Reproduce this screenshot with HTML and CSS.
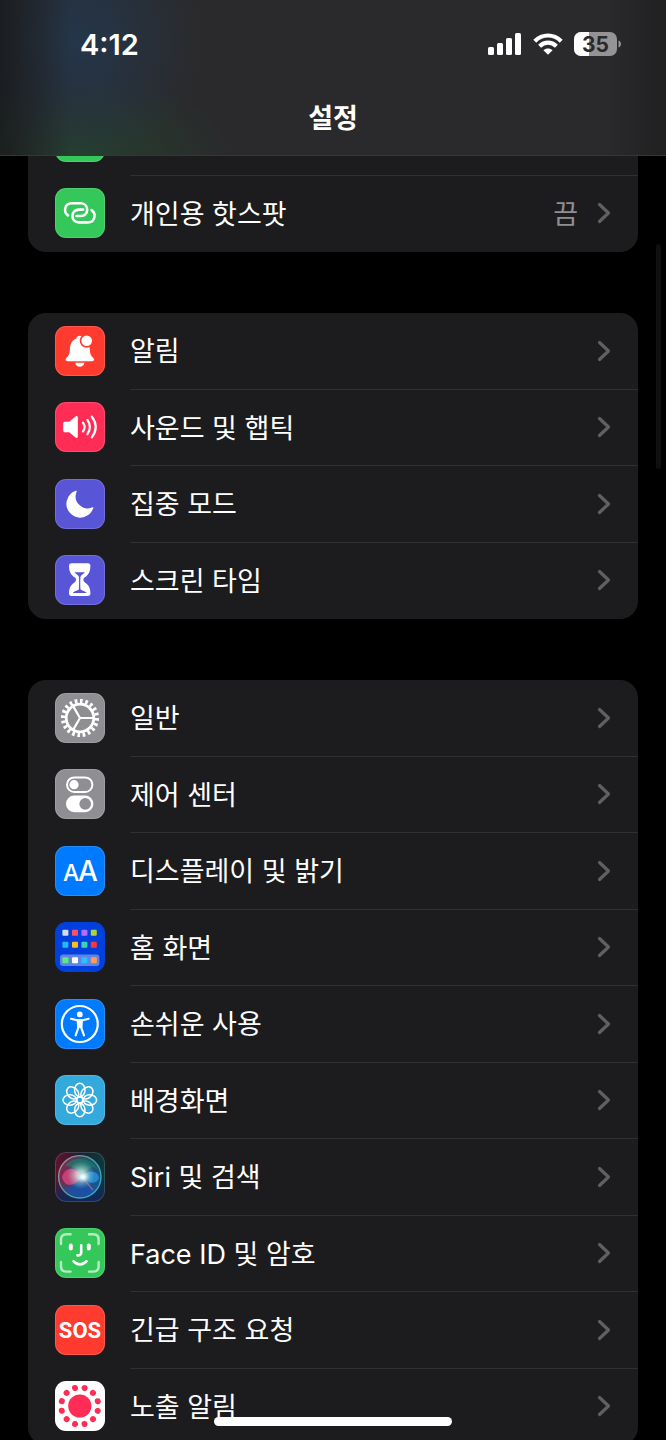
FILE: index.html
```html
<!DOCTYPE html>
<html lang="ko">
  <head>
    <title>설정</title>
    <meta charset="UTF-8" />
    <meta name="viewport" content="width=device-width, initial-scale=1" />
    <link rel="stylesheet" href="styles.css">
  </head>
  <body>
    <svg class="defs" aria-hidden="true">
      <symbol id="chevron" viewBox="0 0 14 22">
        <path d="M2.5 2.5 11.5 11 2.5 19.5" fill="none" stroke="#5f5f64" stroke-width="3.2" stroke-linecap="round" stroke-linejoin="round" />
      </symbol>
    </svg>

    <div class="screen">
      <header class="header">
        <div class="status">
          <span class="time">4:12</span>
          <div class="status-icons">
            <svg width="34" height="24" viewBox="0 0 34 24" fill="#fff">
              <rect x="0" y="15" width="6" height="8" rx="1.5" />
              <rect x="9" y="11" width="6" height="12" rx="1.5" />
              <rect x="18" y="6" width="6" height="17" rx="1.5" />
              <rect x="27" y="1" width="6" height="22" rx="1.5" />
            </svg>
            <svg width="30" height="24" viewBox="0 0 30 24">
              <g fill="none" stroke="#fff" stroke-width="4.2">
                <path d="M1.8 9.2C9.4 1.6 20.6 1.6 28.2 9.2" />
                <path d="M6.6 14.2C11.6 9.5 18.4 9.5 23.4 14.2" />
              </g>
              <path d="M10.4 18.2C13.2 15.8 16.8 15.8 19.6 18.2L15 22.8Z" fill="#fff" />
            </svg>
            <svg width="48" height="24" viewBox="0 0 48 24">
              <clipPath id="cell"><rect width="43" height="24" rx="7" /></clipPath>
              <g clip-path="url(#cell)">
                <rect width="43" height="24" fill="#949496" />
                <rect width="15" height="24" fill="#fff" />
              </g>
              <path d="M44.5 8.5c3.4 1.2 3.4 5.8 0 7z" fill="#949496" />
              <text class="battery-text" x="21.5" y="19.5" text-anchor="middle">35</text>
            </svg>
          </div>
        </div>
        <h1 class="title">설정</h1>
      </header>

      <main class="content">
        <ul class="group">
          <li class="row">
            <a href="#">
              <svg class="icon green" viewBox="0 0 50 50"></svg>
            </a>
          </li>
          <li class="row">
            <a href="#">
              <svg class="icon green" viewBox="0 0 50 50">
                <g fill="none" stroke="#fff" stroke-width="2.6" stroke-linecap="round">
                  <path id="link" d="M13 27.4C8.2 24.2 9.4 15.3 16.6 15.2H25.6C34.4 15.4 34.4 28 25.6 28H21.5" />
                  <use href="#link" transform="rotate(180 24.8 24.8)" />
                </g>
              </svg>
              <span class="label">개인용 핫스팟</span>
              <span class="value">끔</span>
              <svg class="chevron"><use href="#chevron" /></svg>
            </a>
          </li>
        </ul>

        <ul class="group">
          <li class="row">
            <a href="#">
              <svg class="icon red" viewBox="0 0 50 50">
                <path d="M21.4 12.6C21.6 8.8 28 8.8 28.2 12.6C33 14.5 34.6 18 34.8 23C35 28 36 29.6 38.2 31.8C39.8 33.6 39 35.2 37.2 35.2H12.6C10.6 35.2 10 33.6 11.5 31.8C13.8 29.6 14.6 28 14.9 23C15.2 18 16.8 14.5 21.4 12.6Z" fill="#fff" />
                <path d="M20.2 36.8H29.4C28.6 42 21 42 20.2 36.8Z" fill="#fff" />
                <circle cx="31.7" cy="14.7" r="7" fill="#ff3b30" />
                <circle cx="31.7" cy="14.7" r="5.3" fill="#fff" />
              </svg>
              <span class="label">알림</span>
              <svg class="chevron"><use href="#chevron" /></svg>
            </a>
          </li>
          <li class="row">
            <a href="#">
              <svg class="icon pink" viewBox="0 0 50 50">
                <path d="M10 19.8H14.2L20.6 14.4C21.8 13.5 22.8 14 22.8 15.4V34.6C22.8 36 21.8 36.5 20.6 35.6L14.2 30.2H10C8.8 30.2 8.2 29.5 8.2 28.4V21.6C8.2 20.5 8.8 19.8 10 19.8Z" fill="#fff" />
                <g fill="none" stroke="#fff" stroke-width="2.2" stroke-linecap="round">
                  <path d="M28 20.6C30 23.4 30 26.6 28 29.4" />
                  <path d="M32.4 17.8C35.6 22.4 35.6 27.6 32.4 32.2" />
                  <path d="M36.8 14.6C41.8 21.2 41.8 28.8 36.8 35.4" />
                </g>
              </svg>
              <span class="label">사운드 및 햅틱</span>
              <svg class="chevron"><use href="#chevron" /></svg>
            </a>
          </li>
          <li class="row">
            <a href="#">
              <svg class="icon indigo" viewBox="0 0 50 50">
                <path d="M21 12.4A13.1 13.1 0 1 0 37.7 28.9A12.6 12.6 0 0 1 21 12.4Z" fill="#fff" stroke="#fff" stroke-width="1.4" stroke-linejoin="round" />
              </svg>
              <span class="label">집중 모드</span>
              <svg class="chevron"><use href="#chevron" /></svg>
            </a>
          </li>
          <li class="row">
            <a href="#">
              <svg class="icon indigo" viewBox="0 0 50 50">
                <path d="M16.5 8.3H32.9C34.6 8.3 35.4 9.2 35.4 10.8C35.4 17.6 33 20.2 29.4 22.6C28 23.6 28 26 29.4 27C33 29.4 35.4 32 35.4 38.6C35.4 40.2 34.6 41.1 32.9 41.1H16.5C14.8 41.1 14 40.2 14 38.6C14 32 16.4 29.4 20 27C21.4 26 21.4 23.6 20 22.6C16.4 20.2 14 17.6 14 10.8C14 9.2 14.8 8.3 16.5 8.3Z" fill="#fff" />
                <path d="M19.4 17.2H30C29 18.4 26.4 19.8 25.6 21.4C25.2 22.6 25.2 32 25.6 34.4C27 35.6 31 36.2 31.6 38H17.8C18.4 36.2 22.4 35.6 23.8 34.4C24.2 32 24.2 22.6 23.8 21.4C23 19.8 20.4 18.4 19.4 17.2Z" fill="#5856d6" />
              </svg>
              <span class="label">스크린 타임</span>
              <svg class="chevron"><use href="#chevron" /></svg>
            </a>
          </li>
        </ul>

        <ul class="group">
          <li class="row">
            <a href="#">
              <svg class="icon gray" viewBox="0 0 50 50">
                <g fill="none" stroke="#fff">
                  <circle cx="25" cy="25" r="17" stroke-width="4.2" pathLength="40" stroke-dasharray="1 1" />
                  <circle cx="25" cy="25" r="13.8" stroke-width="2.8" />
                  <path d="M25 25H38M25 25 18.4 13.6M25 25 18.4 36.4" stroke-width="2.2" />
                </g>
              </svg>
              <span class="label">일반</span>
              <svg class="chevron"><use href="#chevron" /></svg>
            </a>
          </li>
          <li class="row">
            <a href="#">
              <svg class="icon gray" viewBox="0 0 50 50">
                <rect x="12" y="8.4" width="25.4" height="14.6" rx="7.3" fill="none" stroke="#fff" stroke-width="2" />
                <circle cx="19" cy="15.7" r="4.6" fill="#fff" />
                <rect x="11" y="26.6" width="27.4" height="16.6" rx="8.3" fill="#fff" />
                <circle cx="30.2" cy="34.9" r="5.8" fill="#8e8e93" />
              </svg>
              <span class="label">제어 센터</span>
              <svg class="chevron"><use href="#chevron" /></svg>
            </a>
          </li>
          <li class="row">
            <a href="#">
              <svg class="icon blue" viewBox="0 0 50 50">
                <text class="aa" x="8" y="35.4" font-size="23">A</text>
                <text class="aa" x="23" y="35.4" font-size="28">A</text>
              </svg>
              <span class="label">디스플레이 및 밝기</span>
              <svg class="chevron"><use href="#chevron" /></svg>
            </a>
          </li>
          <li class="row">
            <a href="#">
              <svg class="icon navy" viewBox="0 0 50 50">
                <rect x="5" y="32.6" width="39.4" height="11.4" rx="3" fill="#5f83e8" />
                <rect x="7.4" y="7.8" width="6" height="6" rx="1" fill="#d9dbe3" />
                <rect x="17" y="7.8" width="6" height="6" rx="1" fill="#ff4f6d" />
                <rect x="26.4" y="7.8" width="6" height="6" rx="1" fill="#b66cff" />
                <rect x="35.8" y="7.8" width="6" height="6" rx="1" fill="#aad342" />
                <rect x="7.4" y="19.8" width="6" height="6" rx="1" fill="#23b8f7" />
                <rect x="17" y="19.8" width="6" height="6" rx="1" fill="#fdbf17" />
                <rect x="26.4" y="19.8" width="6" height="6" rx="1" fill="#3fd0b4" />
                <rect x="35.8" y="19.8" width="6" height="6" rx="1" fill="#f9373b" />
                <rect x="7.4" y="35.2" width="6" height="6" rx="1" fill="#5eea7c" />
                <rect x="17" y="35.2" width="6" height="6" rx="1" fill="#fff" />
                <rect x="26.4" y="35.2" width="6" height="6" rx="1" fill="#27c3fb" />
                <rect x="35.8" y="35.2" width="6" height="6" rx="1" fill="#ff9d4f" />
              </svg>
              <span class="label">홈 화면</span>
              <svg class="chevron"><use href="#chevron" /></svg>
            </a>
          </li>
          <li class="row">
            <a href="#">
              <svg class="icon blue" viewBox="0 0 50 50">
                <circle cx="24.8" cy="25" r="18" fill="none" stroke="#fff" stroke-width="2.2" />
                <circle cx="24.8" cy="15.4" r="2.9" fill="#fff" />
                <path d="M16 19.8 22 21.2H27.6L33.6 19.8M23.6 28 20.6 36.4M26 28 29 36.4" fill="none" stroke="#fff" stroke-width="2.2" stroke-linecap="round" stroke-linejoin="round" />
                <path d="M21.6 20.4H28L27.4 29H22.2Z" fill="#fff" />
              </svg>
              <span class="label">손쉬운 사용</span>
              <svg class="chevron"><use href="#chevron" /></svg>
            </a>
          </li>
          <li class="row">
            <a href="#">
              <svg class="icon cyan" viewBox="0 0 50 50">
                <g fill="none" stroke="#fff" stroke-width="1.5">
                  <circle cx="24.8" cy="25" r="3" />
                  <g id="petals">
                    <ellipse id="petal" cx="24.8" cy="15" rx="5.2" ry="6.8" />
                    <use href="#petal" transform="rotate(90 24.8 25)" />
                    <use href="#petal" transform="rotate(180 24.8 25)" />
                    <use href="#petal" transform="rotate(270 24.8 25)" />
                  </g>
                  <use href="#petals" transform="rotate(45 24.8 25)" />
                </g>
              </svg>
              <span class="label">배경화면</span>
              <svg class="chevron"><use href="#chevron" /></svg>
            </a>
          </li>
          <li class="row">
            <a href="#">
              <svg class="icon siri" viewBox="0 0 50 50">
                <defs>
                  <radialGradient id="glow">
                    <stop offset="0" stop-color="#fff" />
                    <stop offset="0.3" stop-color="#eefafc" stop-opacity="0.85" />
                    <stop offset="1" stop-color="#7fd0d0" stop-opacity="0" />
                  </radialGradient>
                  <linearGradient id="orb" x1="0" y1="0.3" x2="1" y2="0.6">
                    <stop offset="0" stop-color="#a02455" />
                    <stop offset="0.5" stop-color="#2a5e78" />
                    <stop offset="1" stop-color="#1666a8" />
                  </linearGradient>
                  <linearGradient id="rim" x1="0" y1="0" x2="1" y2="1">
                    <stop offset="0" stop-color="#c77f92" />
                    <stop offset="0.5" stop-color="#3fa99c" />
                    <stop offset="1" stop-color="#3aa0ee" />
                  </linearGradient>
                </defs>
                <circle cx="24.8" cy="24.8" r="21.2" fill="url(#orb)" fill-opacity="0.75" stroke="url(#rim)" stroke-width="1.4" />
                <path d="M10 14C18 3 36 5 42 17C36 12 31 19 27 25C22 16 16 14 10 14Z" fill="#17876a" fill-opacity="0.6" />
                <path d="M9 36C18 34 22 30 27 26C32 34 36 36 40 36C32 48 16 47 9 36Z" fill="#1a4fc0" fill-opacity="0.6" />
                <path d="M27 25C22 14 10 14 7 25C10 37 20 34 27 25Z" fill="#e8447e" fill-opacity="0.75" />
                <path d="M27 25C32 18 43 18 44 26C42 33 33 32 27 25Z" fill="#2a9df0" fill-opacity="0.7" />
                <path d="M27 25 38 38" stroke="#e07aa0" stroke-opacity="0.5" stroke-width="1.5" />
                <circle cx="26" cy="23" r="14" fill="url(#glow)" fill-opacity="0.8" />
                <ellipse cx="28" cy="25" rx="7" ry="6" fill="url(#glow)" />
              </svg>
              <span class="label">Siri 및 검색</span>
              <svg class="chevron"><use href="#chevron" /></svg>
            </a>
          </li>
          <li class="row">
            <a href="#">
              <svg class="icon green" viewBox="0 0 50 50">
                <g fill="none" stroke="#fff" stroke-linecap="round">
                  <path d="M6 16V11.5Q6 6.3 11.5 6.3H15.6M34 6.3H38.2Q43.6 6.3 43.6 11.5V16M43.6 34V38.2Q43.6 43.6 38.2 43.6H34M15.6 43.6H11.5Q6 43.6 6 38.2V34" stroke-width="2.4" stroke-opacity="0.65" />
                  <path d="M15.8 17.6V20.6M33.8 17.6V20.6" stroke-width="4" />
                  <path d="M26.2 17.4V24.4Q26.2 27.6 22.4 27.4" stroke-width="2.6" />
                  <path d="M18.4 33.2C22 37.4 28 37.4 31.6 33.2" stroke-width="2.6" />
                </g>
              </svg>
              <span class="label">Face ID 및 암호</span>
              <svg class="chevron"><use href="#chevron" /></svg>
            </a>
          </li>
          <li class="row">
            <a href="#">
              <svg class="icon red" viewBox="0 0 50 50">
                <text class="sos" x="25" y="33" text-anchor="middle">SOS</text>
              </svg>
              <span class="label">긴급 구조 요청</span>
              <svg class="chevron"><use href="#chevron" /></svg>
            </a>
          </li>
          <li class="row">
            <a href="#">
              <svg class="icon white" viewBox="0 0 50 50">
                <circle cx="24.8" cy="25" r="11.6" fill="#ff2d55" />
                <circle cx="24.8" cy="25" r="18.6" fill="none" stroke="#ff2d55" stroke-width="6" stroke-linecap="round" pathLength="120" stroke-dasharray="0.01 9.99" transform="rotate(15 24.8 25)" />
              </svg>
              <span class="label">노출 알림</span>
              <svg class="chevron"><use href="#chevron" /></svg>
            </a>
          </li>
        </ul>
      </main>

      <div class="scrollbar"></div>
      <div class="home-indicator"></div>
    </div>
  </body>
</html>
```
FILE: styles.css
```css
* {
  box-sizing: border-box;
}
body {
  margin: 0;
  background-color: #000;
  color: #fff;
  font-family: Inter, "Noto Sans CJK KR", sans-serif;
  font-size: 27px;
}
.defs {
  display: none;
}
.screen {
  position: relative;
  height: 100vh;
  overflow: hidden;
}

/* header over the scrolled list */
.header {
  position: absolute;
  top: 0;
  left: 0;
  right: 0;
  z-index: 2;
  height: 156px;
  border-bottom: 1px solid #363638;
  background: linear-gradient(to right, rgba(24, 26, 28, 0.8), transparent 70px),
    linear-gradient(to left, rgba(30, 30, 31, 0.8), transparent 60px),
    radial-gradient(120px 130px at 80px 40px, #24364a, transparent),
    radial-gradient(150px 80px at 80px 156px, #263f2d, transparent),
    #2a2a2c;
}
.status {
  display: flex;
  justify-content: space-between;
  align-items: center;
  height: 88px;
  padding: 0 44px 0 80px;
}
.time {
  font-size: 29px;
  font-weight: 600;
}
.status-icons {
  display: flex;
  gap: 11px;
}
.battery-text {
  font-size: 21px;
  font-weight: 700;
  fill: #2a2a2c;
}
.title {
  margin: 0;
  line-height: 62px;
  text-align: center;
  font-size: 27px;
  font-weight: 600;
}

/* list */
.content {
  display: flex;
  flex-direction: column;
  gap: 61px;
  padding: 99px 28px 0;
}
.group {
  margin: 0;
  padding: 0;
  list-style: none;
  border-radius: 18px;
  background-color: #1c1c1e;
  overflow: hidden;
}
.row {
  height: 77px;
  background: linear-gradient(#303032, #303032) right bottom / calc(100% - 102px) 1px no-repeat;
}
.row:nth-child(even) {
  height: 76px;
}
.row:last-child {
  background: none;
}
.row a {
  display: flex;
  align-items: center;
  height: 100%;
  padding: 0 27px 2px;
  color: inherit;
  text-decoration: none;
}
.label {
  flex: 1;
  margin-left: 25px;
}
.label,
.value {
  padding-top: 3px;
  line-height: 40px;
}
.value {
  margin-right: 19px;
  color: #8e8e93;
}
.chevron {
  width: 14px;
  height: 22px;
}

/* icon tiles */
.icon {
  width: 50px;
  height: 50px;
  border-radius: 11px;
  box-shadow: inset 0 0 0 1px rgba(255, 255, 255, 0.15);
}
.green {
  background-color: #34c759;
}
.red {
  background-color: #ff3b30;
}
.pink {
  background-color: #ff2d55;
}
.indigo {
  background-color: #5856d6;
}
.gray {
  background-color: #8e8e93;
}
.blue {
  background-color: #007aff;
}
.navy {
  background-color: #0040dd;
  box-shadow: none;
}
.cyan {
  background-color: #34aadc;
}
.white {
  background-color: #fff;
}
.siri {
  background: linear-gradient(to top, #10285a, transparent 50%),
    linear-gradient(to right, #64122f, #1b2230 50%, #0c3a3c);
}
.aa {
  fill: #fff;
  font-weight: 500;
}
.sos {
  fill: #fff;
  font-family: "Liberation Sans Narrow", Roboto, sans-serif;
  font-size: 22px;
  font-weight: 700;
}

.scrollbar {
  position: absolute;
  top: 244px;
  right: 5px;
  width: 5px;
  height: 225px;
  border-radius: 3px;
  background-color: #0f0f10;
}
.home-indicator {
  position: absolute;
  left: 0;
  right: 0;
  bottom: 14px;
  width: 238px;
  height: 9px;
  margin: 0 auto;
  border-radius: 5px;
  background-color: #fff;
}
```
